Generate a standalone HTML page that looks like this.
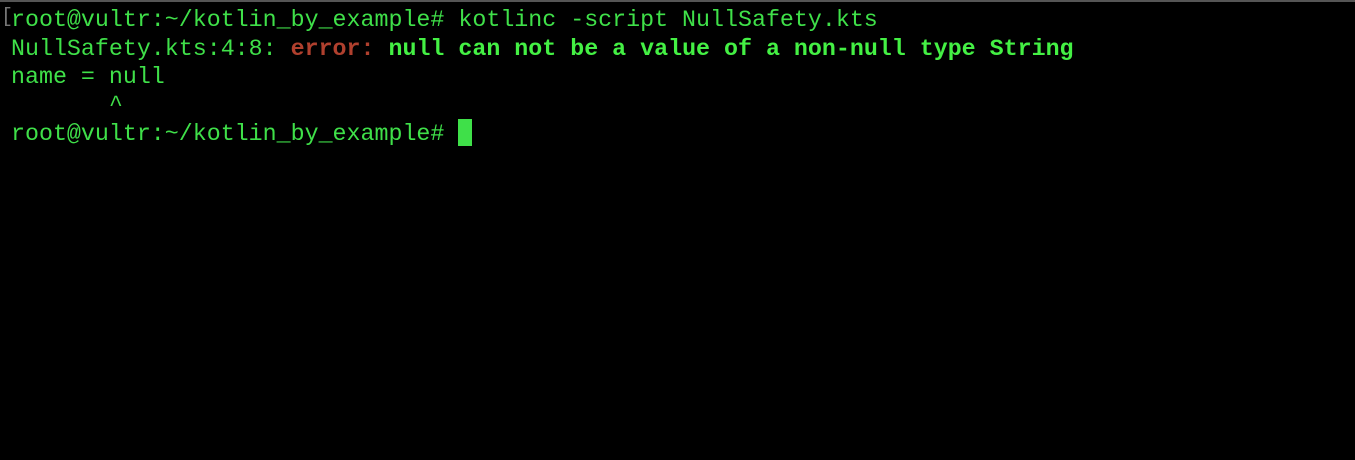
<!DOCTYPE html>
<html><head><style>
html,body{margin:0;padding:0;background:#000;width:1355px;height:460px;overflow:hidden}
body{border-top:2px solid #555;box-sizing:border-box;position:relative}
.l{position:absolute;left:11px;font-family:"Liberation Mono",monospace;font-size:23.3px;line-height:28px;color:#3fe049;white-space:pre}
.b{font-weight:bold;color:#44f044}
.r{font-weight:bold;color:#b0402e}
.cur{position:absolute;left:458px;top:117px;width:14px;height:27px;background:#3fe049}
.br{position:absolute;left:1px;top:4px;font-family:"Liberation Mono",monospace;font-size:20px;color:#777}
</style></head><body>
<div class="br">[</div>
<div class="l" style="top:4px">root@vultr:~/kotlin_by_example# kotlinc -script NullSafety.kts</div>
<div class="l" style="top:33px">NullSafety.kts:4:8: <span class="r">error:</span> <span class="b">null can not be a value of a non-null type String</span></div>
<div class="l" style="top:61px">name = null</div>
<div class="l" style="top:89px">       ^</div>
<div class="l" style="top:118px">root@vultr:~/kotlin_by_example# </div>
<div class="cur"></div>
</body></html>
